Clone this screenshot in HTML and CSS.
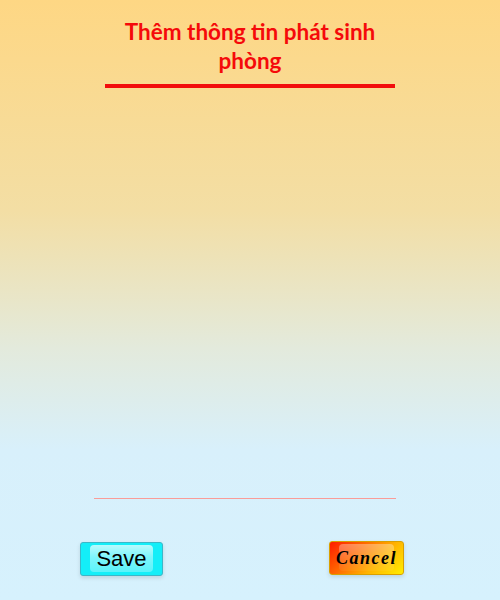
FILE: index.html
```html
<!DOCTYPE html>
<html lang="vi">
<head>
<meta charset="utf-8">
<title>Thêm thông tin phát sinh phòng</title>
<link rel="stylesheet" href="styles.css">
</head>
<body>
<div class="page">
  <header class="header">
    <h1 class="title">Thêm thông tin phát sinh phòng</h1>
  </header>
  <section class="form-area"></section>
  <hr class="divider">
  <div class="actions">
    <button class="btn btn-save" type="button"><span class="btn-label">Save</span></button>
    <button class="btn btn-cancel" type="button"><span class="btn-label">Cancel</span></button>
  </div>
</div>
</body>
</html>
```

FILE: styles.css
```css
html, body {
  margin: 0;
  padding: 0;
}
body {
  width: 500px;
  height: 600px;
  overflow: hidden;
  background: linear-gradient(to bottom, #fed784 0%, #f3dea4 35%, #e3eadc 58%, #d8f0fb 75%, #d6f1fd 100%);
  font-family: "Liberation Sans", Arial, sans-serif;
}
.page {
  display: flex;
  flex-direction: column;
  align-items: center;
  height: 600px;
}
.header {
  width: 290px;
  padding-top: 17px;
  padding-bottom: 9px;
  border-bottom: 4px solid #f20d0d;
}
.title {
  margin: 0;
  font-family: Lato, "Open Sans", sans-serif;
  font-weight: bold;
  font-size: 22.5px;
  line-height: 29px;
  color: #f50a0a;
  text-align: center;
}
.form-area {
  height: 410px;
}
.divider {
  width: 302px;
  height: 0;
  margin: 0 0 0 -10px;
  border: 0;
  border-top: 1px solid #fa9c98;
}
.actions {
  align-self: stretch;
  display: flex;
  justify-content: space-between;
  align-items: flex-start;
  padding: 0 96px 0 80px;
  margin-top: 43px;
}
.btn {
  position: relative;
  border-radius: 3px;
  padding: 0;
  cursor: pointer;
  color: #000;
  box-shadow: 0 2px 4px rgba(0, 0, 0, 0.12);
}
.btn::before {
  content: "";
  position: absolute;
  left: 9px;
  right: 9px;
  top: 2px;
  bottom: 3px;
  border-radius: 4px;
  background: linear-gradient(to bottom, rgba(255,255,255,0.7) 0%, rgba(255,255,255,0.45) 45%, rgba(255,255,255,0.3) 100%);
  pointer-events: none;
}
.btn-label {
  position: relative;
}
.btn-save {
  width: 83px;
  height: 34px;
  border: 1px solid #3bb7c8;
  background: #14eef8;
  font-family: "Liberation Sans", Arial, sans-serif;
  font-size: 22px;
  line-height: 32px;
}
.btn-cancel {
  width: 75px;
  height: 34px;
  border: 1px solid #d9a000;
  background: linear-gradient(135deg, #ff1a00 0%, #ff6a00 35%, #ffb400 65%, #ffee00 100%);
  font-family: "Liberation Serif", "Times New Roman", serif;
  font-weight: bold;
  font-style: italic;
  font-size: 18px;
  letter-spacing: 1.5px;
  line-height: 32px;
  margin-top: -1px;
}
.btn-cancel::before {
  background: linear-gradient(to bottom, rgba(255,255,255,0.35) 0%, rgba(255,255,255,0.15) 60%, rgba(255,255,255,0.05) 100%);
}
```
